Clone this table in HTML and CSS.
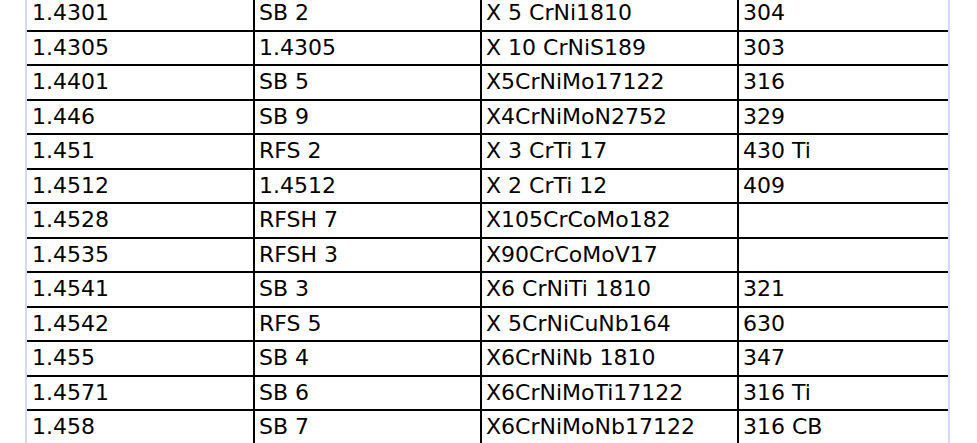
FILE: index.html
```html
<!DOCTYPE html>
<html>
<head>
<meta charset="utf-8">
<link rel="stylesheet" href="styles.css">
</head>
<body>
<div class="frame">
<table class="grades">
<colgroup><col class="c1"><col class="c2"><col class="c3"><col class="c4"></colgroup>
<tbody>
<tr><td>1.4301</td><td>SB 2</td><td>X 5 CrNi1810</td><td class="last">304</td></tr>
<tr><td>1.4305</td><td>1.4305</td><td>X 10 CrNiS189</td><td class="last">303</td></tr>
<tr><td>1.4401</td><td>SB 5</td><td>X5CrNiMo17122</td><td class="last">316</td></tr>
<tr><td>1.446</td><td>SB 9</td><td>X4CrNiMoN2752</td><td class="last">329</td></tr>
<tr><td>1.451</td><td>RFS 2</td><td>X 3 CrTi 17</td><td class="last">430 Ti</td></tr>
<tr><td>1.4512</td><td>1.4512</td><td>X 2 CrTi 12</td><td class="last">409</td></tr>
<tr><td>1.4528</td><td>RFSH 7</td><td>X105CrCoMo182</td><td class="last"></td></tr>
<tr><td>1.4535</td><td>RFSH 3</td><td>X90CrCoMoV17</td><td class="last"></td></tr>
<tr><td>1.4541</td><td>SB 3</td><td>X6 CrNiTi 1810</td><td class="last">321</td></tr>
<tr><td>1.4542</td><td>RFS 5</td><td>X 5CrNiCuNb164</td><td class="last">630</td></tr>
<tr><td>1.455</td><td>SB 4</td><td>X6CrNiNb 1810</td><td class="last">347</td></tr>
<tr><td>1.4571</td><td>SB 6</td><td>X6CrNiMoTi17122</td><td class="last">316 Ti</td></tr>
<tr><td>1.458</td><td>SB 7</td><td>X6CrNiMoNb17122</td><td class="last">316 CB</td></tr>
</tbody>
</table>
</div>
</body>
</html>
```
FILE: styles.css
```css
html, body {
  margin: 0;
  padding: 0;
  background: #ffffff;
  overflow: hidden;
}
.frame {
  margin: -3px 0 0 25px;
  width: 921px;
  border-left: 2px solid #d6d6f6;
  border-right: 2px solid #d6d6f6;
}
.grades {
  width: 921px;
  table-layout: fixed;
  border-collapse: separate;
  border-spacing: 0;
  font-family: "DejaVu Sans", sans-serif;
  font-size: 22px;
  color: #000;
}
.c1 { width: 228px; }
.c2 { width: 227px; }
.c3 { width: 257px; }
.c4 { width: 209px; }
.grades tr { height: 34.5px; }
.grades td {
  box-sizing: border-box;
  height: 34.5px;
  padding: 0 0 0 4px;
  border-bottom: 2px solid #000;
  border-right: 2px solid #000;
  line-height: 1;
  vertical-align: middle;
  white-space: nowrap;
  overflow: hidden;
}
.grades td.last { border-right: none; }
.grades tr td:first-child { padding-left: 5px; }
```
